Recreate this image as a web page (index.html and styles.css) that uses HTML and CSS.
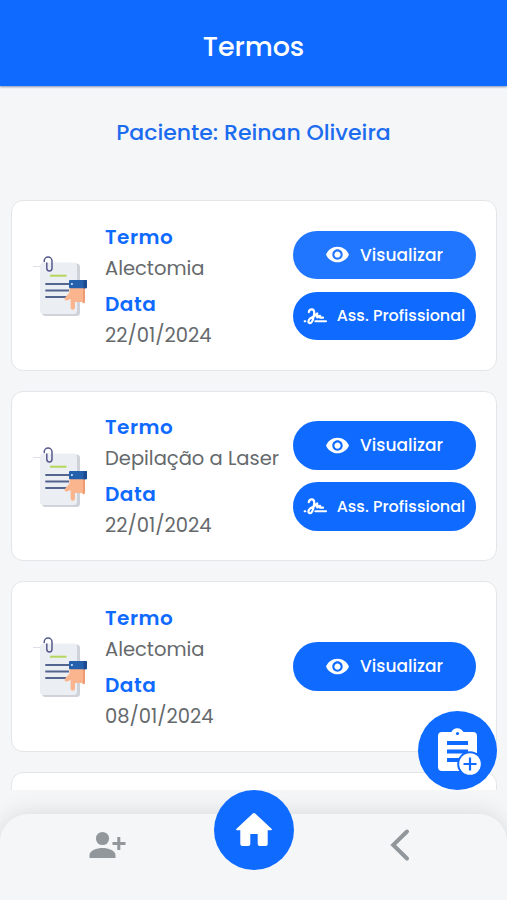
FILE: index.html
```html
<!DOCTYPE html>
<html lang="pt-BR">
<head>
  <meta charset="UTF-8">
  <meta name="viewport" content="width=device-width, initial-scale=1.0">
  <title>Termos</title>
  <link rel="stylesheet" href="styles.css">
</head>
<body>
  <!-- Ícones -->
  <svg class="sprite" width="0" height="0">
    <symbol id="documento" viewBox="0 0 60 64">
      <path d="M3 12.500h7" stroke="#dcdfe6" stroke-width="1"/>
      <rect x="12" y="9.5" width="38" height="52.5" rx="3.5" fill="#cfd3d9"/>
      <rect x="10" y="8.5" width="37" height="51.5" rx="3.5" fill="#ebeef2"/>
      <path d="M14.200 7.500V7a3.900 3.900 0 0 1 7.800 0V14.300a2.600 2.600 0 0 1-5.200 0V9" fill="none" stroke="#56598c" stroke-width="1.500" stroke-linecap="round"/>
      <path d="M20 21.700h16.500" stroke="#b4d65c" stroke-width="2"/>
      <path d="M15.300 30H39M15.300 36.500H39M15.300 43H37" stroke="#53658f" stroke-width="1.900"/>
      <path d="M39.500 34H55V47.500a1.500 1.500 0 0 1-3 .5H45V53.500a2.200 2.200 0 0 1-4.400 0V45l-3 1.300c-2.200.9-4-.8-2.600-2.600l4.500-5.200z" fill="#fbb58e"/>
      <path d="M53 34h2V47.500a1.500 1.500 0 0 1-2 1.200z" fill="#ee9b74"/>
      <rect x="39" y="26" width="18" height="8.200" rx="1" fill="#2560ad"/>
      <path d="M53.500 26H56a1 1 0 0 1 1 1v6.200a1 1 0 0 1-1 1h-2.500z" fill="#1c4b91"/>
      <circle cx="41.900" cy="30" r="1.100" fill="#cfe4ff"/>
    </symbol>
    <symbol id="olho" viewBox="0 0 24 24">
      <path fill="currentColor" d="M12 4.500C7 4.500 2.730 7.610 1 12c1.730 4.390 6 7.500 11 7.500s9.270-3.110 11-7.500c-1.730-4.390-6-7.500-11-7.500zM12 17c-2.760 0-5-2.240-5-5s2.240-5 5-5 5 2.240 5 5-2.240 5-5 5zm0-8c-1.660 0-3 1.340-3 3s1.340 3 3 3 3-1.340 3-3-1.340-3-3-3z"/>
    </symbol>
    <symbol id="assinatura" viewBox="0 0 24 18">
      <path fill="none" stroke="currentColor" stroke-width="2.200" stroke-linecap="round" stroke-linejoin="round" d="M5.800 5.200C6 3.300 7.300 2.200 9 2.300c2.800.2 2.400 4 1.700 7.200-.7 3.600-1.700 6.700-3.700 6.700-2.300 0-1.900-3.400.3-4.900C9.500 9.900 12.500 8.800 14.200 6.500v4c1.200-.4 1.800-1.500 2.900-1.600v1.800H20"/>
      <path stroke="currentColor" stroke-width="1.900" stroke-linecap="round" d="M1.600 14.200h.8M12.300 14.200h10.800"/>
    </symbol>
  </svg>

  <div class="app">
    <header class="topo">
      <h1>Termos</h1>
    </header>

    <main class="conteudo">
      <h2 class="paciente">Paciente: Reinan Oliveira</h2>

      <div class="lista">
        <div class="card">
          <svg class="documento"><use href="#documento"/></svg>
          <dl class="dados">
            <dt>Termo</dt>
            <dd>Alectomia</dd>
            <dt class="data">Data</dt>
            <dd>22/01/2024</dd>
          </dl>
          <div class="acoes">
            <button class="botao ativo"><svg class="olho"><use href="#olho"/></svg><span>Visualizar</span></button>
            <button class="botao assinar"><svg class="assinatura"><use href="#assinatura"/></svg><span>Ass. Profissional</span></button>
          </div>
        </div>

        <div class="card">
          <svg class="documento"><use href="#documento"/></svg>
          <dl class="dados">
            <dt>Termo</dt>
            <dd>Depilação a Laser</dd>
            <dt class="data">Data</dt>
            <dd>22/01/2024</dd>
          </dl>
          <div class="acoes">
            <button class="botao"><svg class="olho"><use href="#olho"/></svg><span>Visualizar</span></button>
            <button class="botao assinar"><svg class="assinatura"><use href="#assinatura"/></svg><span>Ass. Profissional</span></button>
          </div>
        </div>

        <div class="card">
          <svg class="documento"><use href="#documento"/></svg>
          <dl class="dados">
            <dt>Termo</dt>
            <dd>Alectomia</dd>
            <dt class="data">Data</dt>
            <dd>08/01/2024</dd>
          </dl>
          <div class="acoes">
            <button class="botao"><svg class="olho"><use href="#olho"/></svg><span>Visualizar</span></button>
          </div>
        </div>

        <div class="card"></div>
      </div>
    </main>

    <nav class="menu">
      <div class="menu-fundo">
        <a class="adicionar" href="#" aria-label="Adicionar paciente">
          <svg width="38" height="28" viewBox="0 0 38 28" fill="#92979c">
            <circle cx="13.500" cy="7.500" r="6.600"/>
            <path d="M.5 27v-3c0-4.600 7.500-7 13-7s13 2.400 13 7v3zM28.300 6h3v5H36.500v3h-5.200v5h-3v-5h-4.800v-3h4.800z"/>
          </svg>
        </a>
        <a class="voltar" href="#" aria-label="Voltar">
          <svg width="20" height="34" viewBox="0 0 20 34" fill="none" stroke="#92979c" stroke-width="4" stroke-linecap="round">
            <path d="M17 3.500L3.200 17 17 30.500"/>
          </svg>
        </a>
      </div>
      <a class="inicio" href="#" aria-label="Início">
        <svg width="38" height="36" viewBox="0 0 38 36">
          <path fill="#fff" d="M17.800 1.500a1.800 1.800 0 0 1 2.400 0L36.500 16.700c.8.700.4 1.500-.5 1.500h-3.300V32a2 2 0 0 1-2 2h-6a2 2 0 0 1-2-2V22h-7.400v10a2 2 0 0 1-2 2h-6a2 2 0 0 1-2-2V18.200H2c-.9 0-1.300-.8-.5-1.500z"/>
        </svg>
      </a>
    </nav>

    <button class="novo-termo" aria-label="Novo termo">
      <svg width="48" height="50" viewBox="0 0 48 50">
        <path fill="#fff" d="M6 6h9.500a6.500 6.500 0 0 1 10.500-1.800L27.500 6H37a4 4 0 0 1 4 4v31a4 4 0 0 1-4 4H6a4 4 0 0 1-4-4V10a4 4 0 0 1 4-4z"/>
        <circle cx="21.500" cy="7.500" r="1.600" fill="#0f6aff"/>
        <path stroke="#0f6aff" stroke-width="3.800" d="M11 17h21M11 25.500h21M11 34h14"/>
        <circle cx="34" cy="38" r="12.800" fill="#0f6aff"/>
        <circle cx="34" cy="38" r="10.800" fill="#fff"/>
        <path stroke="#0f6aff" stroke-width="2.200" d="M27.500 38h13M34 31.500v13"/>
      </svg>
    </button>
  </div>
</body>
</html>
```
FILE: styles.css
```css
:root {
  --azul: #0f6aff;
  --azul-ativo: #2176ff;
  --fundo: #f4f6f8;
  --texto: #65696c;
  --borda: #e3e6e8;
}

* {
  box-sizing: border-box;
}

body {
  margin: 0;
  background-color: var(--fundo);
  font-family: Poppins, Inter, "Open Sans", sans-serif;
}

.sprite {
  position: absolute;
}

.app {
  position: relative;
  display: flex;
  flex-direction: column;
  width: 100%;
  height: 900px;
  overflow: hidden;
}

.topo {
  flex: none;
  height: 86px;
  padding-top: 8px;
  display: flex;
  align-items: center;
  justify-content: center;
  background-color: var(--azul);
  color: #fff;
  box-shadow: 0 1px 2px rgba(20, 50, 110, 0.5);
  z-index: 1;
}

h1 {
  margin: 0;
  font-size: 27px;
  font-weight: 500;
  letter-spacing: -0.1px;
}

.conteudo {
  flex: none;
  height: 704px;
  overflow: hidden;
}

.paciente {
  margin: 0;
  padding-top: 31px;
  height: 114px;
  line-height: 32px;
  font-size: 22px;
  font-weight: 500;
  color: #1c6cf0;
  text-align: center;
}

.lista {
  display: flex;
  flex-direction: column;
  gap: 20px;
  padding: 0 10px 0 11px;
}

.card {
  flex: none;
  display: flex;
  align-items: center;
  height: 170.5px;
  padding: 0 20px 0 18px;
  background-color: #fff;
  border: 1px solid var(--borda);
  border-radius: 12px;
}

.documento {
  flex: none;
  width: 60px;
  height: 64px;
  margin-top: 2px;
}

.dados {
  flex: 1;
  margin: 0 0 0 15px;
  padding-top: 2px;
  line-height: 31px;
  font-size: 19.5px;
  white-space: nowrap;
}

.dados dt {
  color: var(--azul);
  font-size: 20px;
  font-weight: 600;
  letter-spacing: 0.5px;
}

.dados dt.data {
  margin-top: 5px;
}

.dados dd {
  margin: 0;
  color: var(--texto);
}

.acoes {
  flex: none;
  display: flex;
  flex-direction: column;
  gap: 12.5px;
  width: 183px;
}

.botao {
  display: flex;
  align-items: center;
  justify-content: center;
  gap: 10px;
  height: 48.5px;
  padding: 0 1px 0 0;
  border: none;
  border-radius: 25px;
  background-color: var(--azul);
  color: #fff;
  font-family: inherit;
  font-size: 17px;
  font-weight: 500;
  white-space: nowrap;
}

.botao.ativo {
  background-color: var(--azul-ativo);
}

.botao.assinar {
  font-size: 16px;
}

.olho {
  width: 25px;
  height: 25px;
}

.assinatura {
  width: 24px;
  height: 18px;
}

.menu {
  position: relative;
  flex: none;
  height: 110px;
  padding-top: 24px;
  overflow: hidden;
}

.menu-fundo {
  display: flex;
  justify-content: space-between;
  height: 86px;
  padding: 14px 97px 0 89px;
  background-color: var(--fundo);
  border-radius: 28px 28px 0 0;
  box-shadow: 0 0 24px rgba(0, 0, 0, 0.12);
}

.adicionar {
  padding-top: 3px;
}

/* botão central, sobre a borda do menu */
.inicio {
  position: absolute;
  top: 0;
  left: 214px;
  width: 80px;
  height: 80px;
  display: flex;
  align-items: center;
  justify-content: center;
  border-radius: 50%;
  background-color: var(--azul);
}

.novo-termo {
  position: absolute;
  right: 10px;
  bottom: 110px;
  width: 79px;
  height: 79px;
  display: flex;
  align-items: center;
  justify-content: center;
  padding: 0 0 0 4px;
  border: none;
  border-radius: 50%;
  background-color: var(--azul);
}
```
